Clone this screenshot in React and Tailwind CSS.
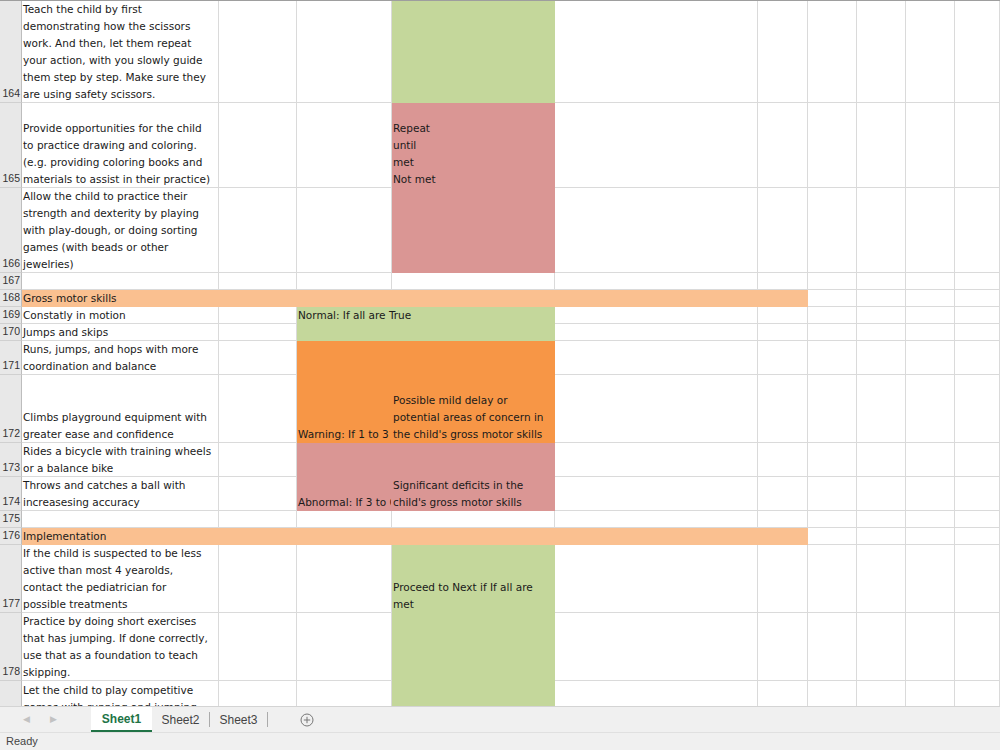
// Worksheet view: checklist rows with colour-coded result cells, sheet tabs and status bar.
import React from 'react';

const GREEN = 'bg-[#c4d79b] border-[#c4d79b]';
const PINK = 'bg-[#da9694] border-[#da9694]';
const ORANGE = 'bg-[#f79646] border-[#f79646]';
const BAND = 'bg-[#fac090] border-[#fac090]';

// column widths include the 1px right gridline
const COLS = [
  { key: 'a', w: 'w-[197px]' },
  { key: 'b', w: 'w-[78px]' },
  { key: 'c', w: 'w-[95px]' },
  { key: 'd', w: 'w-[163px]' },
  { key: 'e', w: 'w-[203px]' },
  { key: 'f', w: 'w-[50px]' },
  { key: 'g', w: 'w-[49px]' },
  { key: 'h', w: 'w-[49px]' },
  { key: 'i', w: 'w-[49px]' },
  { key: 'j', w: 'flex-1' },
];

const ROWS = [
  {
    n: 164, h: 'h-[102px]',
    a: ['Teach the child by first', 'demonstrating how the scissors', 'work. And then, let them repeat', 'your action, with you slowly guide', 'them step by step. Make sure they', 'are using safety scissors.'],
    d: { fill: GREEN },
  },
  {
    n: 165, h: 'h-[85px]',
    a: ['Provide opportunities for the child', 'to practice drawing and coloring.', '(e.g. providing coloring books and', 'materials to assist in their practice)'],
    d: { fill: PINK, lines: ['Repeat', 'until', 'met', 'Not met'] },
  },
  {
    n: 166, h: 'h-[85px]',
    a: ['Allow the child to practice their', 'strength and dexterity by playing', 'with play-dough, or doing sorting', 'games (with beads or other', 'jewelries)'],
    d: { fill: PINK },
  },
  { n: 167, h: 'h-[17px]' },
  { n: 168, h: 'h-[17px]', band: true, a: ['Gross motor skills'] },
  {
    n: 169, h: 'h-[17px]', a: ['Constatly in motion'],
    c: { fill: GREEN, lines: ['Normal: If all are True'], spill: true },
    d: { fill: GREEN },
  },
  { n: 170, h: 'h-[17px]', a: ['Jumps and skips'], c: { fill: GREEN }, d: { fill: GREEN } },
  {
    n: 171, h: 'h-[34px]', a: ['Runs, jumps, and hops with more', 'coordination and balance'],
    c: { fill: ORANGE }, d: { fill: ORANGE },
  },
  {
    n: 172, h: 'h-[68px]', a: ['Climbs playground equipment with', 'greater ease and confidence'],
    c: { fill: ORANGE, lines: ['Warning: If 1 to 3'] },
    d: { fill: ORANGE, lines: ['Possible mild delay or', 'potential areas of concern in', "the child's gross motor skills"] },
  },
  {
    n: 173, h: 'h-[34px]', a: ['Rides a bicycle with training wheels', 'or a balance bike'],
    c: { fill: PINK }, d: { fill: PINK },
  },
  {
    n: 174, h: 'h-[34px]', a: ['Throws and catches a ball with', 'increasesing accuracy'],
    c: { fill: PINK, lines: ['Abnormal: If 3 to 6'] },
    d: { fill: PINK, lines: ['Significant deficits in the', "child's gross motor skills"] },
  },
  { n: 175, h: 'h-[17px]' },
  { n: 176, h: 'h-[17px]', band: true, a: ['Implementation'] },
  {
    n: 177, h: 'h-[68px]',
    a: ['If the child is suspected to be less', 'active than most 4 yearolds,', 'contact the pediatrician for', 'possible treatments'],
    d: { fill: GREEN, lines: ['Proceed to Next if If all are', 'met'] },
  },
  {
    n: 178, h: 'h-[68px]',
    a: ['Practice by doing short exercises', 'that has jumping. If done correctly,', 'use that as a foundation to teach', 'skipping.'],
    d: { fill: GREEN },
  },
  {
    n: 179, h: 'h-[68px]', top: true,
    a: ['Let the child to play competitive', 'games with running and jumping', 'to build stamina and', 'coordination'],
    d: { fill: GREEN },
  },
];

function Lines({ lines, top }) {
  return (
    <div className={'relative top-[1px] flex h-full flex-col pl-[1px] ' + (top ? 'justify-start' : 'justify-end')}>
      {lines.map((t, i) => (
        <div key={i} className="h-[17px] whitespace-pre leading-[17px]">{t}</div>
      ))}
    </div>
  );
}

function Row({ row }) {
  const cells = {};
  if (row.a) cells.a = { lines: row.a };
  if (row.c) cells.c = row.c;
  if (row.d) cells.d = row.d;

  return (
    <div className={'flex shrink-0 ' + row.h}>
      <div className="flex w-[22px] shrink-0 items-end justify-end border-r border-b border-r-[#bdbdbd] border-b-[#d0d0d0] bg-[#e8e8e8] pr-[1px] font-['Liberation_Sans',sans-serif] text-[10.5px] leading-[17px] text-[#333]">
        {row.n}
      </div>
      {COLS.map((col, idx) => {
        const cell = cells[col.key] || {};
        const banded = row.band && idx < 6;
        const fill = banded ? BAND : cell.fill || 'border-[#dadada]';
        return (
          <div
            key={col.key}
            className={
              'shrink-0 border-r border-b ' + col.w + ' ' + fill + ' ' +
              (cell.spill ? 'relative z-10 overflow-visible' : 'overflow-hidden')
            }
          >
            {cell.lines && <Lines lines={cell.lines} top={row.top} />}
          </div>
        );
      })}
    </div>
  );
}

function SheetTabs() {
  return (
    <div className="flex h-[26px] shrink-0 items-stretch border-t border-[#d4d4d4] bg-[#f0f0f0] font-['Liberation_Sans',sans-serif] text-[12px] text-[#444]">
      <div className="flex w-[91px] items-center gap-[20px] pl-[23px] text-[9px] text-[#c2c2c2]">
        <span>◀</span>
        <span>▶</span>
      </div>
      <div className="flex w-[61px] items-center justify-center border-b-2 border-[#217346] bg-white font-bold text-[#217346]">
        Sheet1
      </div>
      <div className="flex w-[57px] items-center justify-center">Sheet2</div>
      <div className="my-[5px] w-px bg-[#ababab]" />
      <div className="flex w-[57px] items-center justify-center">Sheet3</div>
      <div className="my-[5px] w-px bg-[#ababab]" />
      <div className="flex w-[78px] items-center justify-center">
        <svg width="14" height="14" viewBox="0 0 14 14" fill="none" stroke="#777" strokeWidth="1">
          <circle cx="7" cy="7" r="6" />
          <path d="M7 3.8v6.4M3.8 7h6.4" />
        </svg>
      </div>
    </div>
  );
}

export default function App() {
  return (
    <div className="flex h-[750px] w-[1000px] flex-col overflow-hidden bg-white">
      <div className="flex h-[706px] shrink-0 flex-col overflow-hidden border-t border-[#9e9e9e] font-['DejaVu_Sans',sans-serif] text-[10.5px] text-[#1a1a1a]">
        {ROWS.map((r) => (
          <Row key={r.n} row={r} />
        ))}
      </div>
      <SheetTabs />
      <div className="flex flex-1 items-center border-t border-[#e0e0e0] bg-[#f0f0f0] pl-[6px] font-['Liberation_Sans',sans-serif] text-[11px] text-[#444]">
        Ready
      </div>
    </div>
  );
}
